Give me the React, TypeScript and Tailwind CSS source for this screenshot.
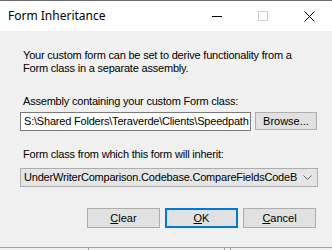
import React from 'react'

export default function App() {
  return (
    <div className="w-[332px] h-[250px] bg-[#f0f0f0] flex flex-col overflow-hidden font-['Liberation_Sans',Arial,sans-serif] text-[11px] leading-[13px] tracking-[-0.2px] text-black">
      <div className="h-px bg-[#6b6b6b]" />

      {/* Title bar */}
      <div className="h-[30px] bg-white flex items-center tracking-normal">
        <span className="pl-[8px] flex-1 font-['Noto_Sans',sans-serif] text-[12px] leading-[16px]">Form Inheritance</span>
        <div className="w-[46px] h-full flex items-center justify-center">
          <div className="w-[10px] h-px bg-black" />
        </div>
        <div className="w-[46px] h-full flex items-center justify-center">
          <div className="w-[10px] h-[10px] border border-[#cccccc]" />
        </div>
        <div className="w-[46px] h-full flex items-center justify-center">
          <svg width="11" height="11" viewBox="0 0 11 11">
            <path d="M0.5 0.5L10.5 10.5M10.5 0.5L0.5 10.5" stroke="#000" strokeWidth="1" fill="none" />
          </svg>
        </div>
      </div>

      {/* Body */}
      <div className="flex flex-col">
        <p className="mt-[18px] pl-[23px]">
          Your custom form can be set to derive functionality from a
          <br />
          Form class in a separate assembly.
        </p>

        <p className="mt-[20px] pl-[23px]">Assembly containing your custom Form class:</p>

        <div className="mt-[4px] flex items-start pl-[20px]">
          <div className="w-[231px] h-[19px] bg-white border border-[#7a7a7a] pl-[3px] flex items-center overflow-hidden">
            <span className="whitespace-nowrap">S:\Shared Folders\Teraverde\Clients\Speedpath</span>
          </div>
          <button className="ml-[4px] w-[62px] h-[18px] bg-[#e1e1e1] border border-[#adadad] flex items-center justify-center tracking-normal">
            Browse...
          </button>
        </div>

        <p className="mt-[17px] pl-[23px]">Form class from which this form will inherit:</p>

        <div className="mt-[7px] ml-[20px] w-[298px] h-[19px] bg-[#e5e5e5] border border-[#adadad] flex items-center">
          <div className="w-[276px] pl-[3px] overflow-hidden">
            <span className="whitespace-nowrap">UnderWriterComparison.Codebase.CompareFieldsCodeBase</span>
          </div>
          <div className="flex-1 flex items-center justify-center">
            <svg width="9" height="5" viewBox="0 0 9 5">
              <path d="M0.5 0.5L4.5 4.5L8.5 0.5" stroke="#606060" strokeWidth="1" fill="none" />
            </svg>
          </div>
        </div>

        <div className="mt-[21px] flex gap-[5px] pl-[87px] tracking-normal">
          <button className="w-[73px] h-[20px] bg-[#e1e1e1] border border-[#adadad] flex items-center justify-center">
            <span><u>C</u>lear</span>
          </button>
          <button className="w-[73px] h-[20px] bg-[#e1e1e1] border-2 border-[#0078d7] flex items-center justify-center">
            <span><u>O</u>K</span>
          </button>
          <button className="w-[73px] h-[20px] bg-[#e1e1e1] border border-[#adadad] flex items-center justify-center">
            <span><u>C</u>ancel</span>
          </button>
        </div>
      </div>

      <div className="mt-auto h-[3px] border-t border-[#a0a0a0] flex">
        <div className="ml-[88px] w-px h-full bg-[#a0a0a0]" />
        <div className="ml-[135px] w-px h-full bg-[#a0a0a0]" />
        <div className="ml-[5px] w-px h-full bg-[#a0a0a0]" />
      </div>
    </div>
  )
}
